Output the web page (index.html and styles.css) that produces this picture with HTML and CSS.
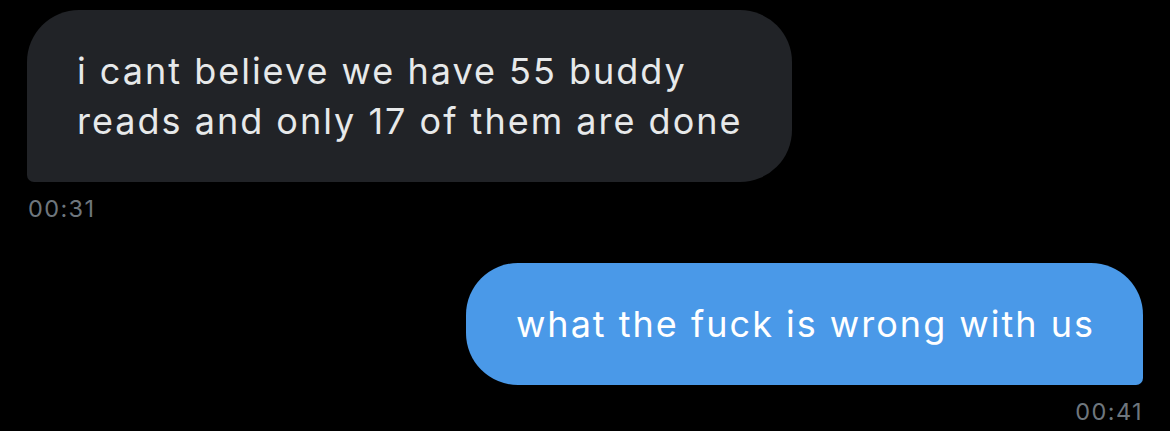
FILE: index.html
```html
<!DOCTYPE html>
<html lang="en">
<head>
    <meta charset="UTF-8">
    <meta name="viewport" content="width=device-width, initial-scale=1.0">
    <title>Messages</title>
    <link rel="stylesheet" href="styles.css">
</head>
<body>
    <div class="chat">
        <div class="message received">
            <div class="bubble">i cant believe we have 55 buddy reads and only 17 of them are done</div>
            <div class="time">00:31</div>
        </div>
        <div class="message sent">
            <div class="bubble">what the fuck is wrong with us</div>
            <div class="time">00:41</div>
        </div>
    </div>
</body>
</html>
```
FILE: styles.css
```css
body {
    margin: 0;
    padding: 0;
    background-color: #000;
    font-family: 'Inter', 'Liberation Sans', sans-serif;
    height: 100vh;
    overflow: hidden;
}

.chat {
    display: flex;
    flex-direction: column;
    gap: 40px;
    padding: 10px 27px 0 27px;
}

.message {
    display: flex;
    flex-direction: column;
}

.bubble {
    padding: 36px 48px 36px 50px;
    font-size: 36px;
    line-height: 50px;
    letter-spacing: 2px;
    border-radius: 52px;
    max-width: 667px;
}

.received {
    align-items: flex-start;
}

.received .bubble {
    background-color: #212327;
    color: #e7e9ea;
    border-bottom-left-radius: 7px;
}

.sent {
    align-items: flex-end;
}

.sent .bubble {
    background-color: #4a99e8;
    color: #fff;
    border-bottom-right-radius: 7px;
}

.time {
    font-size: 23.5px;
    line-height: 29px;
    letter-spacing: 1.4px;
    color: #6e767d;
    margin-top: 12px;
    padding: 0 1px;
}

.sent .time {
    padding-right: 0;
}
```
